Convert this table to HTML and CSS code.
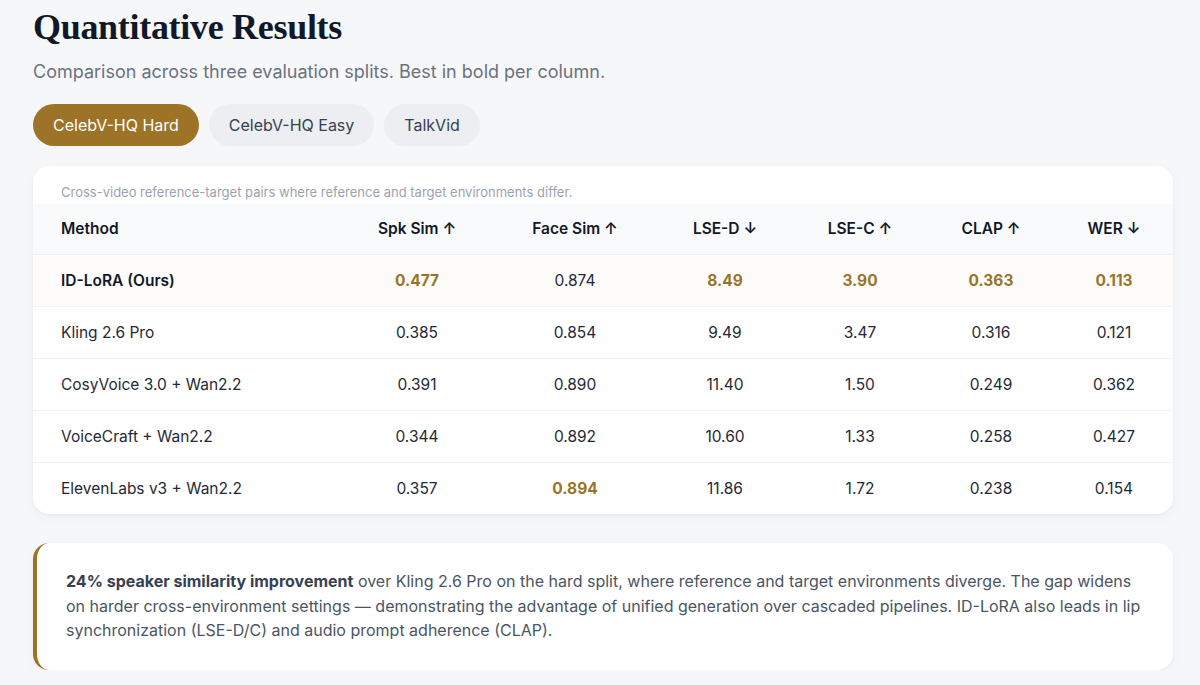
FILE: index.html
```html
<!DOCTYPE html>
<html lang="en">
<head>
<meta charset="utf-8">
<title>Quantitative Results</title>
<link rel="stylesheet" href="styles.css">
</head>
<body>
<main class="page">
  <h1 class="title">Quantitative Results</h1>
  <p class="subtitle">Comparison across three evaluation splits. Best in bold per column.</p>

  <div class="tabs">
    <button class="tab active">CelebV-HQ Hard</button>
    <button class="tab">CelebV-HQ Easy</button>
    <button class="tab">TalkVid</button>
  </div>

  <section class="card">
    <p class="caption">Cross-video reference-target pairs where reference and target environments differ.</p>
    <table class="results">
      <colgroup>
        <col class="c-method">
        <col class="c-spk">
        <col class="c-face">
        <col class="c-lsed">
        <col class="c-lsec">
        <col class="c-clap">
        <col class="c-wer">
      </colgroup>
      <thead>
        <tr>
          <th class="left">Method</th>
          <th>Spk Sim <span class="arr">↑</span></th>
          <th>Face Sim <span class="arr">↑</span></th>
          <th>LSE-D <span class="arr">↓</span></th>
          <th>LSE-C <span class="arr">↑</span></th>
          <th>CLAP <span class="arr">↑</span></th>
          <th>WER <span class="arr">↓</span></th>
        </tr>
      </thead>
      <tbody>
        <tr class="ours">
          <td class="left">ID-LoRA (Ours)</td>
          <td class="best">0.477</td>
          <td>0.874</td>
          <td class="best">8.49</td>
          <td class="best">3.90</td>
          <td class="best">0.363</td>
          <td class="best">0.113</td>
        </tr>
        <tr>
          <td class="left">Kling 2.6 Pro</td>
          <td>0.385</td>
          <td>0.854</td>
          <td>9.49</td>
          <td>3.47</td>
          <td>0.316</td>
          <td>0.121</td>
        </tr>
        <tr>
          <td class="left">CosyVoice 3.0 + Wan2.2</td>
          <td>0.391</td>
          <td>0.890</td>
          <td>11.40</td>
          <td>1.50</td>
          <td>0.249</td>
          <td>0.362</td>
        </tr>
        <tr>
          <td class="left">VoiceCraft + Wan2.2</td>
          <td>0.344</td>
          <td>0.892</td>
          <td>10.60</td>
          <td>1.33</td>
          <td>0.258</td>
          <td>0.427</td>
        </tr>
        <tr>
          <td class="left">ElevenLabs v3 + Wan2.2</td>
          <td>0.357</td>
          <td class="best">0.894</td>
          <td>11.86</td>
          <td>1.72</td>
          <td>0.238</td>
          <td>0.154</td>
        </tr>
      </tbody>
    </table>
  </section>

  <aside class="callout">
    <p><strong>24% speaker similarity improvement</strong> over Kling 2.6 Pro on the hard split, where reference and target environments diverge. The gap widens on harder cross-environment settings — demonstrating the advantage of unified generation over cascaded pipelines. ID-LoRA also leads in lip synchronization (LSE-D/C) and audio prompt adherence (CLAP).</p>
  </aside>
</main>
</body>
</html>
```

FILE: styles.css
```css
* { box-sizing: border-box; }

html, body {
  margin: 0;
  padding: 0;
  background: #f6f7f9;
}

body {
  font-family: "Inter", "Liberation Sans", sans-serif;
  color: #111827;
}

.page {
  padding: 7px 27px 0 33px;
}

.title {
  margin: 0;
  font-family: "Liberation Serif", "DejaVu Serif", serif;
  font-weight: 700;
  font-size: 36px;
  line-height: 40px;
  color: #111827;
  letter-spacing: -0.3px;
}

.subtitle {
  margin: 12px 0 0;
  font-size: 18px;
  line-height: 26px;
  color: #6b7280;
}

.tabs {
  display: flex;
  gap: 10px;
  margin-top: 19px;
}

.tab {
  font-family: inherit;
  font-size: 16px;
  height: 42px;
  padding: 0 20px;
  border: none;
  border-radius: 21px;
  background: #eceef1;
  color: #374151;
  cursor: pointer;
}

.tab.active {
  background: #9c7327;
  color: #ffffff;
}

.card {
  margin-top: 20px;
  background: #ffffff;
  border-radius: 16px;
  box-shadow: 0 1px 3px rgba(17, 24, 39, 0.05), 0 4px 14px rgba(17, 24, 39, 0.03);
  overflow: hidden;
}

.caption {
  margin: 0;
  padding: 18px 28px 3px;
  font-size: 13px;
  line-height: 17px;
  color: #9ca3af;
}

.results {
  width: 100%;
  border-collapse: collapse;
  table-layout: fixed;
  font-size: 15.5px;
}

.c-method { width: 308px; }
.c-spk { width: 152px; }
.c-face { width: 164px; }
.c-lsed { width: 136px; }
.c-lsec { width: 134px; }
.c-clap { width: 128px; }
.c-wer { width: 118px; }

.results th,
.results td {
  text-align: center;
  padding: 0;
  height: 52px;
}

.results thead th {
  height: 50px;
  background: #f9fafb;
  font-weight: 600;
  color: #111827;
  border-bottom: 1px solid #eef0f2;
}

.results .left {
  text-align: left;
  padding-left: 28px;
}

.arr {
  font-weight: 600;
}

.results tbody td {
  color: #1f2937;
  border-bottom: 1px solid #f1f2f4;
}

.results tbody tr:last-child td {
  border-bottom: none;
}

.results tr.ours td {
  background: #fdfcfa;
  font-weight: 600;
  color: #111827;
}

.results td.best,
.results tr.ours td.best {
  color: #9a7429;
  font-weight: 700;
}

.results tr.ours td:not(.best):not(.left) {
  font-weight: 400;
  color: #1f2937;
}

.callout {
  margin-top: 29px;
  background: #ffffff;
  border-left: 4px solid #9c7327;
  border-radius: 16px;
  box-shadow: 0 1px 3px rgba(17, 24, 39, 0.05), 0 4px 14px rgba(17, 24, 39, 0.03);
  padding: 26px 28px 27px 29px;
}

.callout p {
  margin: 0;
  font-size: 16px;
  line-height: 24.5px;
  color: #4b5563;
}

.callout strong {
  font-weight: 700;
  color: #374151;
}
```
